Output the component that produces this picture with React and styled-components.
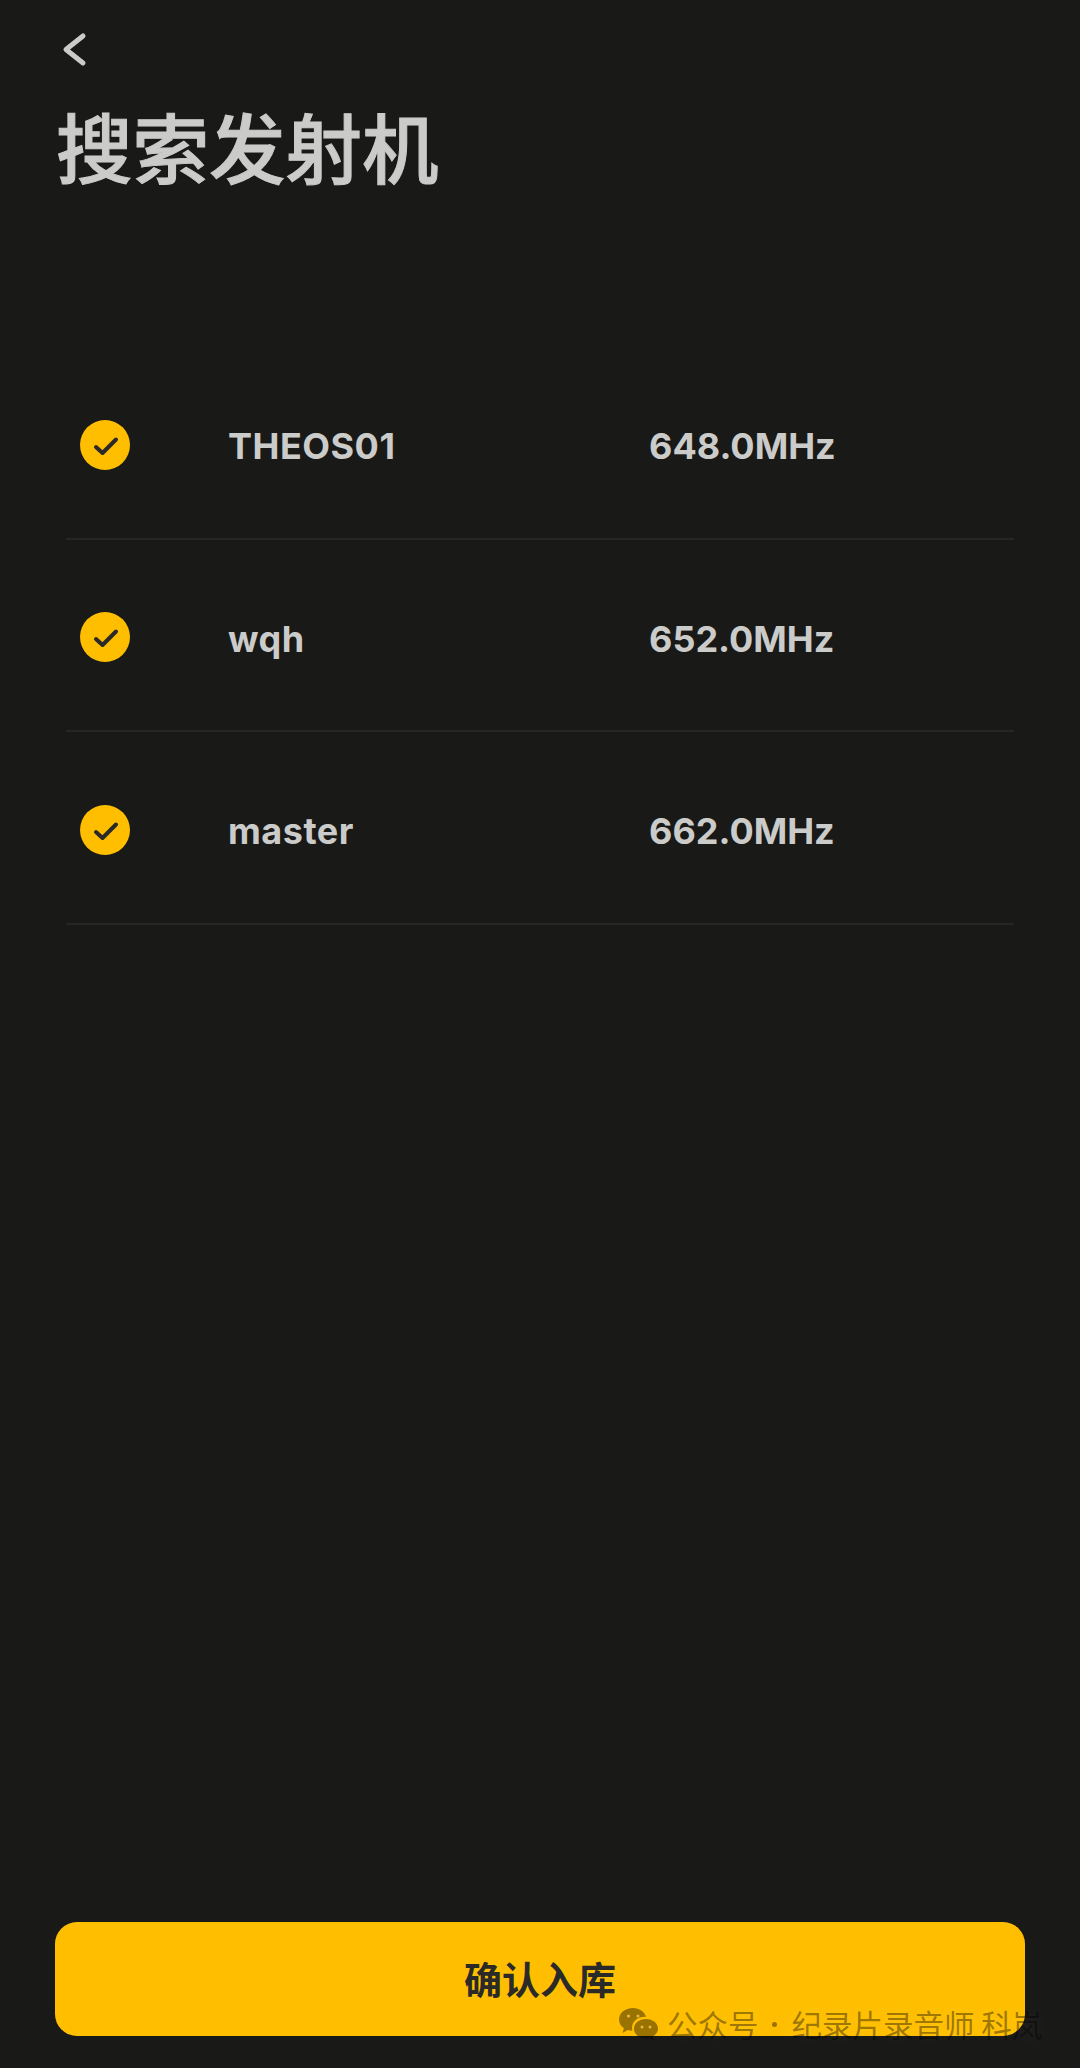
import React from 'react';
import styled, { createGlobalStyle } from 'styled-components';

const GlobalStyle = createGlobalStyle`
  html, body {
    margin: 0;
    padding: 0;
    background: #191918;
  }
`;

const Page = styled.div`
  position: relative;
  width: 1080px;
  height: 2068px;
  box-sizing: border-box;
  display: flex;
  flex-direction: column;
  padding: 0 66px 32px;
  overflow: hidden;
  background: #191918;
  color: #cbcbc9;
  font-family: Inter, "Noto Sans CJK SC", sans-serif;
`;

const BackButton = styled.button`
  align-self: flex-start;
  display: flex;
  margin: 30px 0 0 -7px;
  padding: 0;
  border: none;
  background: none;
  color: #cbcbc9;
`;

const Title = styled.h1`
  margin: 30px 0 0 -10px;
  font-family: "Noto Sans CJK SC", sans-serif;
  font-size: 76.5px;
  line-height: 90px;
  font-weight: 500;
  -webkit-text-stroke: 1px #cbcbc9;
  color: #cbcbc9;
`;

const List = styled.div`
  margin-top: 157px;
  display: flex;
  flex-direction: column;
`;

const Row = styled.div`
  display: grid;
  grid-template-columns: 163px 420px 1fr;
  align-items: center;
  height: 192.5px;
  padding-top: 8px;
  box-sizing: border-box;
  border-bottom: 2px solid #262625;
  font-size: 36px;
  font-weight: 700;
`;

const Check = styled.span`
  display: flex;
  align-items: center;
  justify-content: center;
  width: 50px;
  height: 50px;
  margin: -3px 0 0 14px;
  border-radius: 50%;
  background: #ffbf00;
  color: #2a2a28;
`;

const DeviceName = styled.span`
  margin-left: -1px;
  letter-spacing: 0.5px;
`;

const Footer = styled.div`
  margin: auto -11px 0;
`;

const ConfirmButton = styled.button`
  display: block;
  width: 100%;
  height: 114px;
  padding: 0 0 3px;
  border: none;
  border-radius: 22px;
  background: #ffbf00;
  color: #2a2a28;
  font-family: "Noto Sans CJK SC", sans-serif;
  font-size: 38px;
  font-weight: 700;
`;

const Watermark = styled.div`
  position: absolute;
  left: 618px;
  bottom: 27px;
  display: flex;
  align-items: center;
  gap: 9px;
  font-family: "Noto Sans CJK SC", sans-serif;
  font-size: 30.5px;
  line-height: 34px;
  font-weight: 400;
  white-space: nowrap;
  color: rgba(0, 0, 0, 0.4);
  text-shadow: 0 0 14px rgba(255, 255, 255, 0.07);
`;

const WatermarkText = styled.span`
  display: flex;
  align-items: center;
`;

const Dot = styled.span`
  display: block;
  width: 5px;
  height: 5px;
  margin: 0 15px 0 13px;
  border-radius: 50%;
  background: currentColor;
`;

const devices = [
  { name: 'THEOS01', freq: '648.0MHz' },
  { name: 'wqh', freq: '652.0MHz' },
  { name: 'master', freq: '662.0MHz' },
];

const WeChatIcon = () => (
  <svg width="40" height="34" viewBox="0 0 40 34" fill="currentColor">
    <path d="M15 1C7 1 1 6 1 12.500c0 3.600 1.900 6.700 4.900 8.800L4.500 26l5.300-2.900c1.500.4 3 .6 4.600.7-.3-1-.4-2-.4-3 0-6.100 5.600-11 12.900-11 .4 0 .8 0 1.200.1C26.500 4.700 21.200 1 15 1Z" />
    <path d="M28 12C21 12 16 16.400 16 21.800S21 31.500 28 31.500c1.300 0 2.600-.2 3.700-.5l3.800 2.500-1-3.900C37.800 27.800 40 25 40 21.800 40 16.400 35 12 28 12Z" />
    <g fill="#ffd257" fillOpacity="0.75">
      <circle cx="10.500" cy="9" r="1.600" />
      <circle cx="20" cy="9" r="1.600" />
      <circle cx="24" cy="20" r="1.500" />
      <circle cx="32" cy="20" r="1.500" />
    </g>
  </svg>
);

const App = () => {
  return (
    <Page>
      <GlobalStyle />
      <BackButton aria-label="back">
        <svg width="36" height="40" viewBox="0 0 36 40" fill="none" stroke="currentColor" strokeWidth="5" strokeLinecap="round" strokeLinejoin="round">
          <path d="M24 6 7 19.500 24 33" />
        </svg>
      </BackButton>
      <Title>搜索发射机</Title>
      <List>
        {devices.map((d) => (
          <Row key={d.name}>
            <Check>
              <svg width="28" height="28" viewBox="0 0 28 28" fill="none" stroke="currentColor" strokeWidth="4" strokeLinecap="round" strokeLinejoin="round">
                <path d="M5 16l6.500 6L25 8.500" />
              </svg>
            </Check>
            <DeviceName>{d.name}</DeviceName>
            <span>{d.freq}</span>
          </Row>
        ))}
      </List>
      <Footer>
        <ConfirmButton>确认入库</ConfirmButton>
      </Footer>
      <Watermark>
        <WeChatIcon />
        <WatermarkText>
          <span>公众号</span>
          <Dot />
          <span>纪录片录音师 科岚</span>
        </WatermarkText>
      </Watermark>
    </Page>
  );
};

export default App;
